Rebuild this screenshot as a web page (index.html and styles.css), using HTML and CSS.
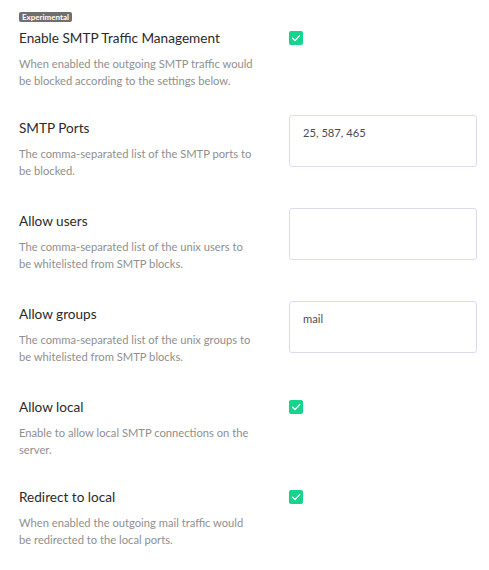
FILE: index.html
```html
<!DOCTYPE html>
<html>
<head>
<meta charset="utf-8">
<link rel="stylesheet" href="styles.css">
</head>
<body>
<div class="page">
  <div class="badge">Experimental</div>

  <div class="row row-check">
    <div class="info">
      <div class="title">Enable SMTP Traffic Management</div>
      <div class="desc">When enabled the outgoing SMTP traffic would be blocked according to the settings below.</div>
    </div>
    <div class="control">
      <span class="check"><svg viewBox="0 0 14 14" width="14" height="14"><polyline points="3.6,7.3 6,9.6 10.6,4.6" fill="none" stroke="#fff" stroke-width="1.4" stroke-linecap="round" stroke-linejoin="round"/></svg></span>
    </div>
  </div>

  <div class="row row-input">
    <div class="info">
      <div class="title">SMTP Ports</div>
      <div class="desc">The comma-separated list of the SMTP ports to be blocked.</div>
    </div>
    <div class="control">
      <div class="textbox">25, 587, 465</div>
    </div>
  </div>

  <div class="row row-input">
    <div class="info">
      <div class="title">Allow users</div>
      <div class="desc">The comma-separated list of the unix users to be whitelisted from SMTP blocks.</div>
    </div>
    <div class="control">
      <div class="textbox"></div>
    </div>
  </div>

  <div class="row row-input">
    <div class="info">
      <div class="title">Allow groups</div>
      <div class="desc">The comma-separated list of the unix groups to be whitelisted from SMTP blocks.</div>
    </div>
    <div class="control">
      <div class="textbox">mail</div>
    </div>
  </div>

  <div class="row row-check">
    <div class="info">
      <div class="title">Allow local</div>
      <div class="desc">Enable to allow local SMTP connections on the server.</div>
    </div>
    <div class="control">
      <span class="check"><svg viewBox="0 0 14 14" width="14" height="14"><polyline points="3.6,7.3 6,9.6 10.6,4.6" fill="none" stroke="#fff" stroke-width="1.4" stroke-linecap="round" stroke-linejoin="round"/></svg></span>
    </div>
  </div>

  <div class="row row-check">
    <div class="info">
      <div class="title">Redirect to local</div>
      <div class="desc">When enabled the outgoing mail traffic would be redirected to the local ports.</div>
    </div>
    <div class="control">
      <span class="check"><svg viewBox="0 0 14 14" width="14" height="14"><polyline points="3.6,7.3 6,9.6 10.6,4.6" fill="none" stroke="#fff" stroke-width="1.4" stroke-linecap="round" stroke-linejoin="round"/></svg></span>
    </div>
  </div>
</div>
</body>
</html>
```

FILE: styles.css
```css
html, body {
  margin: 0;
  padding: 0;
  background: #ffffff;
}
body {
  font-family: Lato, "Open Sans", sans-serif;
}
.page {
  padding: 12px 0 0 19px;
}
.badge {
  width: fit-content;
  height: 10px;
  line-height: 10px;
  padding: 0 3px;
  font-size: 8px;
  font-weight: 700;
  color: #ffffff;
  background: #6f6f6f;
  border-radius: 2px;
}
.row {
  display: flex;
  align-items: flex-start;
}
.row-check {
  padding-bottom: 29px;
}
.row-input {
  padding-bottom: 32px;
}
.badge + .row {
  margin-top: 5.6px;
}
.info {
  width: 270px;
}
.title {
  font-size: 13.6px;
  line-height: 20px;
  color: #2a2a2a;
}
.desc {
  margin-top: 7px;
  width: 235px;
  font-size: 11.2px;
  line-height: 17px;
  color: #8f8f8f;
}
.control {
  width: 188px;
}
.check {
  display: block;
  width: 14px;
  height: 14px;
  margin-top: 3px;
  background: #17d38c;
  border-radius: 2px;
}
.check svg {
  display: block;
}
.textbox {
  box-sizing: border-box;
  margin-top: -3px;
  height: 52px;
  padding: 8px 13px;
  border: 1px solid #dddcee;
  border-radius: 3px;
  font-size: 11.2px;
  line-height: 17px;
  color: #4d4d4d;
}
```
